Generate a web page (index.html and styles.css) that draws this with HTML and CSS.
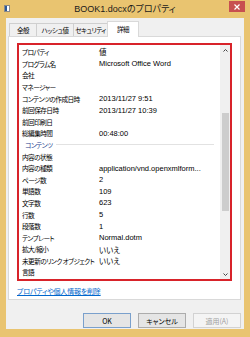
FILE: index.html
```html
<!DOCTYPE html>
<html lang="ja">
<head>
    <meta charset="utf-8">
    <title>BOOK1.docxのプロパティ</title>
    <link rel="stylesheet" href="styles.css">
</head>
<body>
    <div class="window">
        <div class="titlebar">
            <svg class="appIcon" width="6" height="7" viewBox="0 0 6 7">
                <rect x="0.5" y="0.5" width="5" height="6" fill="#fff" stroke="#8a8a8a"/>
                <rect x="1" y="1" width="2" height="5" fill="#2b5797"/>
            </svg>
            <span class="title">BOOK1.docxのプロパティ</span>
            <div class="closeBtn">
                <svg width="6" height="6" viewBox="0 0 6 6"><path d="M0.5 0.5 L5.5 5.5 M5.5 0.5 L0.5 5.5" stroke="#fff" stroke-width="1.2"/></svg>
            </div>
        </div>
        <div class="client">
            <div class="tabs">
                <div class="tab tabGeneral">全般</div>
                <div class="tab tabHash">ハッシュ値</div>
                <div class="tab tabSecurity">セキュリティ</div>
                <div class="tab tabDetail active">詳細</div>
            </div>
            <div class="panel">
                <div class="highlight">
                    <div class="list">
                        <div class="rows">
                            <div class="row head"><span class="key">プロパティ</span><span class="val">値</span></div>
                            <div class="row"><span class="key">プログラム名</span><span class="val">Microsoft Office Word</span></div>
                            <div class="row"><span class="key">会社</span><span class="val"></span></div>
                            <div class="row"><span class="key">マネージャー</span><span class="val"></span></div>
                            <div class="row"><span class="key">コンテンツの作成日時</span><span class="val">2013/11/27 9:51</span></div>
                            <div class="row"><span class="key">前回保存日時</span><span class="val">2013/11/27 10:39</span></div>
                            <div class="row"><span class="key">前回印刷日</span><span class="val"></span></div>
                            <div class="row"><span class="key">総編集時間</span><span class="val">00:48:00</span></div>
                            <div class="row group"><span class="groupName">コンテンツ</span><span class="groupLine"></span></div>
                            <div class="row"><span class="key">内容の状態</span><span class="val"></span></div>
                            <div class="row"><span class="key">内容の種類</span><span class="val">application/vnd.openxmlform...</span></div>
                            <div class="row"><span class="key">ページ数</span><span class="val">2</span></div>
                            <div class="row"><span class="key">単語数</span><span class="val">109</span></div>
                            <div class="row"><span class="key">文字数</span><span class="val">623</span></div>
                            <div class="row"><span class="key">行数</span><span class="val">5</span></div>
                            <div class="row"><span class="key">段落数</span><span class="val">1</span></div>
                            <div class="row"><span class="key">テンプレート</span><span class="val">Normal.dotm</span></div>
                            <div class="row"><span class="key">拡大/縮小</span><span class="val">いいえ</span></div>
                            <div class="row"><span class="key">未更新のリンク オブジェクト</span><span class="val">いいえ</span></div>
                            <div class="row"><span class="key">言語</span><span class="val"></span></div>
                        </div>
                        <div class="scrollbar">
                            <div class="arrow">
                                <svg width="5" height="3" viewBox="0 0 5 3"><path d="M0.5 2.5 L2.5 0.5 L4.5 2.5" fill="none" stroke="#444" stroke-width="1"/></svg>
                            </div>
                            <div class="track"><div class="thumb"></div></div>
                            <div class="arrow">
                                <svg width="5" height="3" viewBox="0 0 5 3"><path d="M0.5 0.5 L2.5 2.5 L4.5 0.5" fill="none" stroke="#444" stroke-width="1"/></svg>
                            </div>
                        </div>
                    </div>
                </div>
                <a class="removeLink" href="#">プロパティや個人情報を削除</a>
            </div>
            <div class="buttons">
                <button class="btn default">OK</button>
                <button class="btn">キャンセル</button>
                <button class="btn" disabled>適用(A)</button>
            </div>
        </div>
    </div>
</body>
</html>
```

FILE: styles.css
```css
body {
    margin: 0;
    padding: 0;
    font-family: "Noto Sans CJK JP", sans-serif;
    color: #000;
}
.window {
    width: 250px;
    height: 337px;
    background-color: #e9c470;
    display: flex;
    flex-direction: column;
}
.titlebar {
    height: 18px;
    display: grid;
    grid-template-columns: 1fr auto 1fr;
    align-items: start;
}
.appIcon {
    margin: 5px 0 0 4px;
}
.title {
    font-family: "Liberation Sans", "Noto Sans CJK JP", sans-serif;
    font-size: 9px;
    line-height: 19px;
    color: #1a1a1a;
    white-space: nowrap;
    font-feature-settings: "palt";
}
.closeBtn {
    justify-self: end;
    margin: 1px 5px 0 0;
    width: 16px;
    height: 11px;
    background-color: #c75050;
    display: flex;
    align-items: center;
    justify-content: center;
}
.client {
    flex: 1;
    margin: 0 6px 8px 6px;
    padding: 3px 3px 0 2px;
    background-color: #f0f0f0;
    display: flex;
    flex-direction: column;
}
.tabs {
    display: flex;
    align-items: flex-end;
    height: 15px;
    padding-left: 1px;
}
.tab {
    box-sizing: border-box;
    height: 13px;
    margin-right: -1px;
    border: 1px solid #cfcfcf;
    border-bottom: none;
    background-color: #f0f0f0;
    font-size: 6.5px;
    line-height: 12px;
    text-align: center;
    letter-spacing: -0.5px;
    font-feature-settings: "palt";
    white-space: nowrap;
}
.tabGeneral { width: 28px; }
.tabHash { width: 38px; }
.tabSecurity { width: 35px; }
.tabDetail { width: 32px; }
.tab.active {
    position: relative;
    z-index: 1;
    height: 16px;
    margin-bottom: -1px;
    background-color: #fff;
    border-color: #d9d9d9;
    line-height: 15px;
}
.panel {
    border: 1px solid #d9d9d9;
    background-color: #fff;
    padding: 6px 8px 3px 8px;
}
.highlight {
    box-sizing: border-box;
    height: 238px;
    border: 2px solid #d8232a;
}
.list {
    display: flex;
    height: 100%;
}
.rows {
    flex: 1;
    min-width: 0;
}
.row {
    display: flex;
    align-items: center;
    height: 11.6px;
    font-size: 6.7px;
    white-space: nowrap;
}
.row.head {
    height: 13px;
}
.key {
    box-sizing: border-box;
    width: 80px;
    padding-left: 3px;
    overflow: hidden;
    letter-spacing: -0.6px;
    font-feature-settings: "palt";
}
.val {
    font-family: "Liberation Sans", "Noto Sans CJK JP", sans-serif;
    font-size: 7.5px;
    font-feature-settings: "palt";
}
.group .groupName {
    padding-left: 6px;
    color: #1e3c8c;
    letter-spacing: -0.6px;
    font-feature-settings: "palt";
}
.groupLine {
    flex: 1;
    height: 1px;
    margin: 0 6px 0 4px;
    background-color: #e2e2e2;
}
.scrollbar {
    width: 10px;
    background-color: #f0f0f0;
    display: flex;
    flex-direction: column;
}
.arrow {
    height: 10px;
    display: flex;
    align-items: center;
    justify-content: center;
}
.track {
    flex: 1;
    padding: 58px 1.5px 0 1.5px;
}
.thumb {
    height: 98px;
    background-color: #cdcdcd;
}
.removeLink {
    display: block;
    margin-top: 6px;
    font-size: 7px;
    line-height: 9px;
    color: #0066cc;
    letter-spacing: -0.2px;
    font-feature-settings: "palt";
    width: fit-content;
}
.buttons {
    display: flex;
    justify-content: flex-end;
    gap: 7px;
    margin-top: 13px;
}
.btn {
    box-sizing: border-box;
    width: 48px;
    height: 15px;
    padding: 0;
    border: 1px solid #acacac;
    background-color: #e5e5e5;
    font-family: "Noto Sans CJK JP", sans-serif;
    font-size: 7px;
    color: #000;
    font-feature-settings: "palt";
}
.btn.default {
    border-color: #7aa0cc;
}
.btn:disabled {
    background-color: #f4f4f4;
    border-color: #d2d2d2;
    color: #a0a0a0;
}
```
